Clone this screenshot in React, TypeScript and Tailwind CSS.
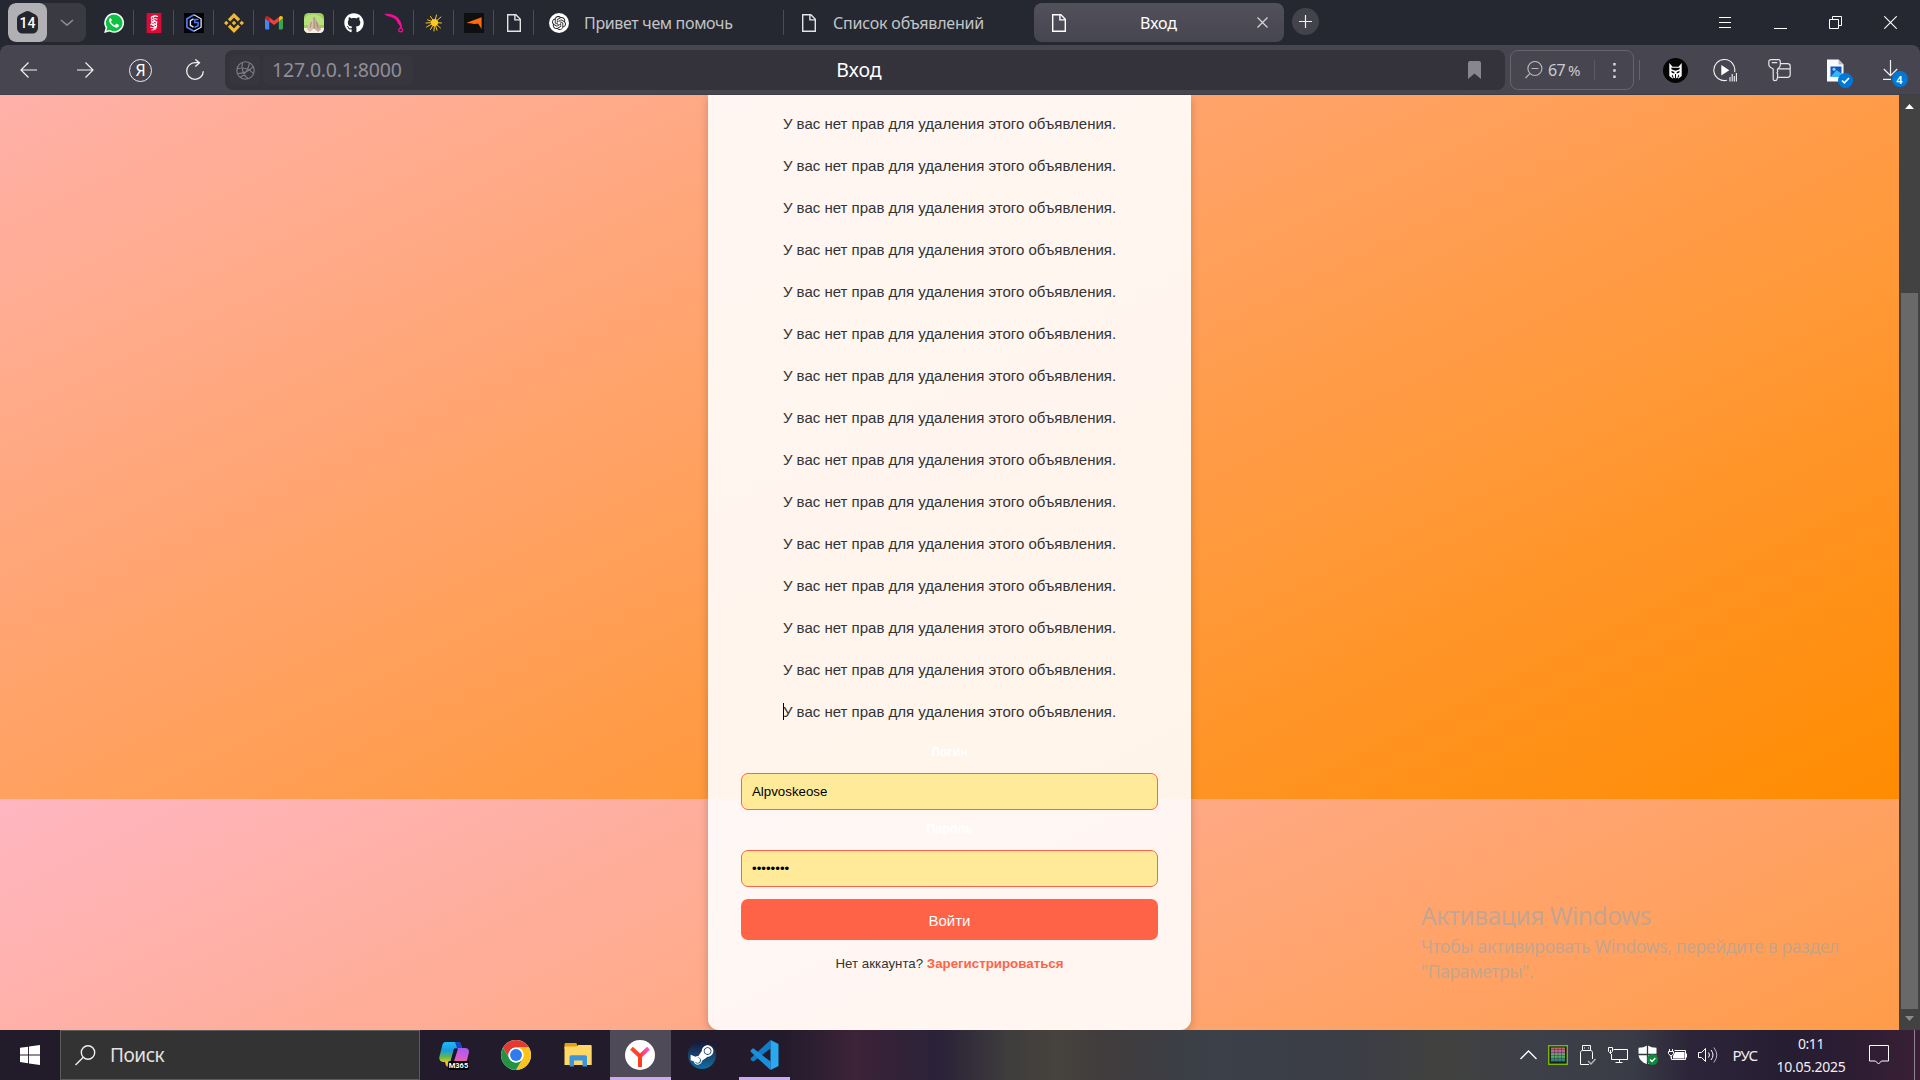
import React from 'react';
import { FaGithub, FaWhatsapp, FaSteamSymbol } from 'react-icons/fa';
import { SiBinance, SiOpenai } from 'react-icons/si';

const MESSAGE = 'У вас нет прав для удаления этого объявления.';
const MESSAGE_COUNT = 15;

type Box = { className?: string; children: React.ReactNode };

/* ---------- Favicons ---------- */

function DocIcon({ color = '#e4e4e6' }: { color?: string }) {
  return (
    <svg width="20" height="20" viewBox="0 0 20 20" fill="none" stroke={color} strokeWidth="1.4">
      <path d="M3.7 1.7h8.2l4.4 4.6v12H3.7z" />
      <path d="M10.9 1.7v5.2h5.2" />
    </svg>
  );
}

function WhatsAppIcon() {
  return (
    <svg width="20" height="20" viewBox="0 0 20 20">
      <path d="M10.100 0A9.900 9.900 0 0 0 1.600 14.900L.1 20l5.300-1.400A9.900 9.900 0 1 0 10.100 0z" fill="#fff" />
      <path d="M10.100 1.600a8.300 8.300 0 0 0-6.800 13l-1 3.200 3.400-.9A8.300 8.300 0 1 0 10.100 1.600z" fill="#0cc143" />
      <path d="M7 5.200c-.3-.1-.8 0-1.200.4-.6.700-.9 1.500-.6 2.600.8 2.700 3.300 5.400 6.300 6.400 1.500.4 3.200-.5 3.400-1.900.1-.5 0-.8-.3-.9l-2-1c-.4-.1-.6 0-.8.300l-.7.9c-.2.200-.5.200-.8.100-1.500-.7-2.500-1.700-3.300-3.100-.1-.3 0-.5.200-.7.500-.5.800-.9.600-1.400z" fill="#fff" />
    </svg>
  );
}

function RedScriptIcon() {
  return (
    <svg width="20" height="20" viewBox="0 0 20 20">
      <rect x="2.6" width="14.8" height="20" fill="#dc0a37" />
      <g fill="none" stroke="#fff" strokeWidth="1.1">
        <path d="M14 3.500C10 2 6.500 3.600 7.300 5.500c.8 1.700 5.700 2.200 5.500 4.500-.2 2-4 2.300-6.500 1.300" />
        <path d="M13.500 6.200C10.500 5 7 6.300 7.500 8.200c.6 1.900 5.700 2.300 5.300 4.600-.3 1.900-4 2.200-6.500 1.200" />
        <path d="M13.300 9c-2.800-1.200-6-.3-5.600 1.700.4 1.800 4.700 2.500 4.400 4.300-.3 1.500-2.600 2-4.600 2" />
        <path d="M11 2.500 8.700 5M12 13.500 9.500 16" />
      </g>
    </svg>
  );
}

function HexIcon() {
  return (
    <svg width="20" height="20" viewBox="0 0 20 20" fill="none">
      <rect width="20" height="20" fill="#020203" />
      <path d="M10 1.700 2.900 5.800v8.400L10 18.300" stroke="#5b7cf0" strokeWidth="1.700" />
      <path d="m10 1.700 7.100 4.100v8.400L10 18.300" stroke="#dfe6fb" strokeWidth="1.300" />
      <path d="M9.500 5.800 6.400 7.600v4.800l3.100 1.800" stroke="#dfe6fb" strokeWidth="1.400" />
      <path d="M14.500 6.500h-3.700v3h3.300v3.200l-3.600 1.800" stroke="#4d74f5" strokeWidth="1.500" />
    </svg>
  );
}

function GmailIcon() {
  return (
    <svg width="20" height="20" viewBox="0 0 20 20">
      <path d="M1 5.200v9.800c0 .9.600 1.500 1.400 1.500H5.200V8.300z" fill="#4285f4" />
      <path d="M14.800 8.300v8.200h2.800c.8 0 1.400-.6 1.400-1.500V5.200z" fill="#34a853" />
      <path d="M14.800 4.200v4.200L19 5.300V5c0-1.700-1.900-2.600-3.200-1.600z" fill="#fbbc04" />
      <path d="M5.200 8.400V4.200L10 7.700l4.800-3.500v4.200L10 12z" fill="#ea4335" />
      <path d="M1 5v.3l4.200 3.100V4.200l-1-.8C2.900 2.400 1 3.300 1 5z" fill="#c5221f" />
    </svg>
  );
}

function HandsIcon() {
  return (
    <svg width="20" height="20" viewBox="0 0 20 20">
      <defs>
        <clipPath id="handsClip">
          <rect width="20" height="20" rx="4.500" />
        </clipPath>
      </defs>
      <g clipPath="url(#handsClip)">
        <rect width="20" height="20" fill="#9dcc5a" />
        <path d="M0 6 4 2l6-1 6 2 4 4v5H0z" fill="#b5e07a" />
        <path d="M0 15h20v5H0z" fill="#f3efe9" />
        <path d="M9.800 4c-1.300 0-2.300 4-4.700 7.500-1 1.700-2.100 3.500-2 5L6 19l3.800-3.500z" fill="#d9bfae" />
        <path d="M10.200 4c1.300 0 2.300 4 4.700 7.500 1 1.700 2.100 3.500 2 5L14 19l-3.800-3.500z" fill="#c9ab99" />
        <path d="M10 4v12M7.500 9 6 15M12.500 9l1.500 6" stroke="#8d7768" strokeWidth=".7" />
      </g>
    </svg>
  );
}

function PinkTailIcon() {
  return (
    <svg width="20" height="20" viewBox="0 0 20 20" fill="none">
      <path d="M.5 1C8.500-.2 15 4 17 9.500c.8 2.300 1.300 4.500.8 6.500l-1.300-.5c.1-2-1-3.700-2.700-5C13.300 6.500 8 3.500 4 3.200 2.500 2.800 1 2 .5 1z" fill="#f70c93" />
      <circle cx="16.700" cy="17" r="1.900" stroke="#f70c93" strokeWidth="1.200" />
    </svg>
  );
}

function SunIcon() {
  return (
    <svg width="20" height="20" viewBox="0 0 20 20" stroke="#fbca1e" strokeLinecap="round">
      <circle cx="10.500" cy="9.500" r="3.600" fill="#fbca1e" stroke="none" />
      <path d="M10.500 9.500 12.500 2M10.500 9.500 17 4M10.500 9.500l7 .5M10.500 9.500l6 5.500M10.500 9.500l2.500 7.700M10.500 9.500 10 18M10.500 9.500l-4 7M10.500 9.500 2.500 14M10.500 9.500 2 10M10.500 9.500l-7-2.700M10.500 9.500l-4-6" strokeWidth="1" />
    </svg>
  );
}

function OrangeWingIcon() {
  return (
    <svg width="20" height="20" viewBox="0 0 20 20">
      <rect width="20" height="20" fill="#0e0f10" />
      <path d="M2.700 9.800 17.600 4.300v11.800l-3.400-5.300c-3.500.3-8 .3-11.500-1z" fill="#ff6a0d" />
    </svg>
  );
}

function ChatGptIcon() {
  return (
    <span className="flex h-5 w-5 shrink-0 items-center justify-center rounded-full bg-white">
      <SiOpenai className="h-[14px] w-[14px] text-[#202123]" />
    </span>
  );
}

const favicons = [
  <WhatsAppIcon />,
  <RedScriptIcon />,
  <HexIcon />,
  <SiBinance className="h-5 w-5 text-[#f3ba2f]" />,
  <GmailIcon />,
  <HandsIcon />,
  <FaGithub className="h-[20px] w-[20px] text-white" />,
  <PinkTailIcon />,
  <SunIcon />,
  <OrangeWingIcon />,
  <DocIcon />,
];

/* ---------- Browser chrome ---------- */

function TabStrip() {
  return (
    <div className="flex h-[45px] bg-[#252830] text-[#c3c4c7]">
      <div className="mt-[3px] ml-2 flex h-[39px] w-[78px] overflow-hidden rounded-[8px] bg-[#3a3a42]">
        <div className="flex w-[39px] items-center justify-center rounded-[8px] bg-[#b0b0b5]">
          <span className="relative flex h-[23px] w-[21px] items-center justify-center">
            <svg className="absolute inset-0" width="21" height="23" viewBox="0 0 21 23">
              <path d="M8.500.6a4 4 0 0 1 4 0l5.800 3A4.600 4.600 0 0 1 21 7.700V17a5.500 5.500 0 0 1-5.500 5.500h-10A5.500 5.500 0 0 1 0 17V7.700a4.600 4.600 0 0 1 2.700-4.100z" fill="#24262e" />
            </svg>
            <span className="relative font-['Roboto',sans-serif] text-[14px] leading-none font-medium text-white">14</span>
          </span>
        </div>
        <div className="flex flex-1 items-center justify-center">
          <svg width="14" height="8" viewBox="0 0 14 8" fill="none" stroke="#8a8a92" strokeWidth="1.600">
            <path d="m1 1 6 5.200L13 1" />
          </svg>
        </div>
      </div>
      <div className="ml-[8px] flex h-[45px]">
        {favicons.map((icon, i) => (
          <div key={i} className="flex h-[45px] w-10 items-center">
            <div className="flex h-5 w-full items-center justify-center">{icon}</div>
            <div className="-ml-px h-[25px] w-px shrink-0 bg-[#4b4d55]" />
          </div>
        ))}
      </div>
      <div className="flex w-[249.500px] items-center">
        <div className="ml-[15px] flex items-center">
          <ChatGptIcon />
          <span className="ml-[15px] text-[16px] tracking-[-0.340px]">Привет чем помочь</span>
        </div>
        <div className="ml-auto h-[25px] w-px bg-[#4b4d55]" />
      </div>
      <div className="flex w-[250.500px] items-center">
        <div className="ml-[15.500px] flex items-center">
          <DocIcon />
          <span className="ml-[14px] text-[16px] tracking-[-0.200px]">Список объявлений</span>
        </div>
      </div>
      <div className="mt-[3px] flex h-[39px] w-[250px] items-center rounded-[8px] bg-linear-to-b from-[#52515b] to-[#474650] text-white">
        <div className="ml-[15px] w-5">
          <DocIcon color="#ffffff" />
        </div>
        <span className="flex-1 pr-[6px] text-center text-[16px]">Вход</span>
        <svg className="mr-[16px] ml-[3px]" width="11" height="11" viewBox="0 0 11 11" stroke="#d6d6da" strokeWidth="1.200">
          <path d="m.5.5 10 10M10.500.5l-10 10" />
        </svg>
      </div>
      <div className="mt-2 ml-2 flex h-[27px] w-[27px] items-center justify-center rounded-full bg-[#42434b]">
        <svg width="13" height="13" viewBox="0 0 13 13" stroke="#f0f0f2" strokeWidth="1.200">
          <path d="M6.500 0v13M0 6.500h13" />
        </svg>
      </div>
      <div className="mr-[2px] ml-auto flex">
        <div className="flex w-[55px] items-center justify-center pr-px">
          <svg width="12" height="11" viewBox="0 0 12 11" fill="#fff">
            <path d="M0 0h12v1H0zM0 5h12v1H0zM0 10h12v1H0z" />
          </svg>
        </div>
        <div className="flex w-[55px] items-center justify-center">
          <div className="mt-[12px] h-px w-[13px] bg-white" />
        </div>
        <div className="flex w-[55px] items-center justify-center">
          <svg width="13" height="13" viewBox="0 0 13 13" fill="none" stroke="#fff">
            <path d="M.5 3.500h9v9h-9zM3.500 3.500v-3h9v9h-3" />
          </svg>
        </div>
        <div className="flex w-[55px] items-center justify-center">
          <svg width="13" height="13" viewBox="0 0 13 13" stroke="#fff" strokeWidth="1.100">
            <path d="m.3.3 12.400 12.400M12.700.3.300 12.700" />
          </svg>
        </div>
      </div>
    </div>
  );
}

function Cell({ className = '', children }: Box) {
  return <div className={`flex h-full shrink-0 items-center justify-center ${className}`}>{children}</div>;
}

function Toolbar() {
  return (
    <div className="h-[50px] bg-[#252830]">
      <div className="flex h-[50px] items-center rounded-t-[8px] bg-[#474650] shadow-[inset_0_-1px_0_#3f3e47]">
        <Cell className="w-[57px]">
          <svg width="17" height="16" viewBox="0 0 17 16" fill="none" stroke="#f1f1f3" strokeWidth="1.200">
            <path d="M17 8H1M8.500.5 1 8l7.500 7.500" />
          </svg>
        </Cell>
        <Cell className="w-[57px]">
          <svg width="17" height="16" viewBox="0 0 17 16" fill="none" stroke="#f1f1f3" strokeWidth="1.200">
            <path d="M0 8h16M8.500.5 16 8l-7.500 7.500" />
          </svg>
        </Cell>
        <Cell className="w-[53px]">
          <div className="flex h-[23px] w-[23px] items-center justify-center rounded-full border border-[#ededf0] text-[16px] leading-none text-white">
            Я
          </div>
        </Cell>
        <Cell className="w-[55px]">
          <svg width="20" height="22" viewBox="0 0 20 22" fill="none" stroke="#f1f1f3" strokeWidth="1.300">
            <path d="M18.300 12.200a8.300 8.300 0 1 1-8.300-8.500h4" />
            <path d="m10.300.4 4.200 3.400-4.200 3.700" />
          </svg>
        </Cell>
        <div className="ml-[3px] flex h-10 w-[1280px] items-center rounded-[8px] bg-[#34333c]">
          <div className="ml-[5px] flex h-[30px] w-[30px] items-center justify-center rounded-[6px] bg-[#37363f]">
            <svg width="19" height="19" viewBox="0 0 19 19" fill="none" stroke="#7f7f89" strokeWidth="1.100">
              <circle cx="9.500" cy="9.500" r="8.700" />
              <path d="M6.500 1.500C5 7 7 14 12 17.800M13.500 1.800C12.500 8 8.500 14.500 4 16.200M1 8c5-2.200 12-.5 16.500 4.500M1.500 12.500C7 12.500 14 10 17 5.500" />
            </svg>
          </div>
          <div className="ml-[3px] flex h-[30px] w-[150px] items-center rounded-[6px] bg-[#37363f] pl-[9px] text-[19.500px] tracking-[-0.200px] text-[#8f8f97]">
            127.0.0.1:8000
          </div>
          <div className="w-[892px] text-center text-[19.500px] text-white">Вход</div>
          <svg className="mr-[24px] ml-auto" width="13" height="18" viewBox="0 0 13 18" fill="#87868e">
            <path d="M2 0h9a2 2 0 0 1 2 2v16l-6.500-5.500L0 18V2a2 2 0 0 1 2-2z" />
          </svg>
        </div>
        <div className="ml-[5px] flex h-10 w-[124px] items-center rounded-[8px] border border-[#66656e]">
          <svg className="ml-[14px]" width="18" height="18" viewBox="0 0 18 18" fill="none" stroke="#b5b5ba" strokeWidth="1.200">
            <circle cx="9.900" cy="7.500" r="7" />
            <path d="M4.800 12.600.5 17M6.500 7.500h7" />
          </svg>
          <span className="ml-[5px] flex w-[32px] items-baseline justify-between text-[16px] tracking-[-0.550px] whitespace-pre text-[#cbcbcf]">
            67 <span className="-ml-[2px] text-[15px]">%</span>
          </span>
          <div className="ml-[14px] h-[20px] w-px bg-[#5b5a63]" />
          <svg className="ml-[18px]" width="3" height="15" viewBox="0 0 3 15" fill="#d8d8dc">
            <path d="M.2 0h2.500v2.500H.2zM.2 6.200h2.500v2.500H.2zM.2 12.500h2.500V15H.2z" />
          </svg>
        </div>
        <div className="ml-[5px] h-[20px] w-px bg-[#65646d]" />
        <Cell className="ml-[13px] w-[45px]">
          <svg width="25" height="25" viewBox="0 0 25 25">
            <circle cx="12.500" cy="12.500" r="12.500" fill="#050505" />
            <path d="M6.300 5v13l3.200 2.500 1.400-.8 1.600.8 1.600-.8 1.400.8 3.200-2.500V5l-3.200 3.700H9.500z" fill="#fff" />
            <path d="M8 9.800h9l-.8 1.700-3.700 1.200-3.700-1.200zM8.300 12.800l3 1.200v1.500l-2.500-.7zM16.700 12.800l-3 1.200v1.500l2.500-.7zM12 16h1v4.500h-1zM9.300 16.500l1.300 2.800-.5.700-1.400-2zM15.700 16.500l-1.300 2.800.5.700 1.400-2z" fill="#050505" />
          </svg>
        </Cell>
        <Cell className="w-[54px]">
          <svg width="24" height="23" viewBox="0 0 24 23" fill="none" stroke="#f1f1f3" strokeWidth="1.100">
            <path d="M14 21.200a10.500 10.500 0 1 1 7.600-8" />
            <path d="M8.300 6v10.500l8-5.200z" fill="#fff" stroke="none" />
            <path d="M17 18v4.500M19.200 15v7.500M21.300 17v5.500M23.400 14v8.500" />
          </svg>
        </Cell>
        <Cell className="w-[54px]">
          <svg width="23" height="23" viewBox="0 0 23 23" fill="none" stroke="#e6e6e9" strokeWidth="1.200">
            <path d="M3 .7h7.500c1.200 0 1.800 1 1.800 2v3.300c0 1.600-.8 2.800-2.600 4l-.4 1 .5 1.400-.8 1.300.8 1.500-.5 4.500c-.2 1.200-1.200 2-2.400 2-1 0-1.700-.7-1.700-1.700V10C2.500 8.700.8 7.300.8 5.500V2.700C.8 1.500 1.800.7 3 .7zM3.800 3.600h5.400" />
            <path d="M12.400 4.700h7.200c1.500 0 2.600 1 2.600 2.500v8.600c0 1.500-1 2.500-2.600 2.500h-9.400M10.500 9.800h11.600" />
          </svg>
        </Cell>
        <Cell className="ml-[2px] w-[54px]">
          <span className="relative h-[23px] w-[18px]">
            <svg width="20" height="23" viewBox="0 0 20 23">
              <path d="M1 .5h11.500l5 5V22.500H1z" fill="#fafafa" />
              <path d="M12.500.5v5h5z" fill="#b9bbc0" />
              <rect x="4.500" y="7.500" width="11" height="10.500" fill="#1554b8" />
              <path d="m4.500 18 6-7 5 3.500V18z" fill="#35b6f2" />
              <circle cx="8" cy="10.200" r="1.500" fill="#7fd3ff" />
            </svg>
            <span className="absolute top-[14px] left-[12px] flex h-[15px] w-[15px] items-center justify-center rounded-full bg-[#0078d7]">
              <svg width="9" height="7" viewBox="0 0 9 7" fill="none" stroke="#fff" strokeWidth="1.700">
                <path d="m1 3.500 2.400 2.300L8 1" />
              </svg>
            </span>
          </span>
        </Cell>
        <Cell className="w-[56px]">
          <span className="relative h-[20px] w-[15px]">
            <svg width="15" height="20" viewBox="0 0 15 20" fill="none" stroke="#f1f1f3" strokeWidth="1.200">
              <path d="M7.500 0v15.500M.8 9l6.700 6.700L14.200 9M0 19.300h8" />
            </svg>
            <span className="absolute top-[11px] left-[9px] flex h-[16px] w-[16px] items-center justify-center rounded-full bg-[#0078d7] text-[11px] leading-none font-semibold text-white">
              4
            </span>
          </span>
        </Cell>
      </div>
    </div>
  );
}

/* ---------- Page ---------- */

function Field({ label, value }: { label: string; value: string }) {
  return (
    <>
      <label className="flex h-10 items-center justify-center pb-px text-[12.500px] leading-none font-bold text-white">{label}</label>
      <div className="flex h-[37px] items-center rounded-[7px] border border-[#ff6347] bg-[#ffea99] pl-[10px] text-[13.300px] leading-none text-black">
        {value}
      </div>
    </>
  );
}

function LoginPage() {
  return (
    <main className="flex h-full w-[1899px] justify-center overflow-hidden bg-[linear-gradient(to_bottom_right,#ffb6c1,#ff8c00)] bg-[length:100%_935px] bg-[position:0_704px] bg-repeat-y font-['Liberation_Sans',Arial,sans-serif]">
      <div className="flex h-[935px] w-[483px] flex-col rounded-b-[11px] bg-white/90 px-[33px] pt-[7px] text-[#333] shadow-[0_3px_10px_rgba(0,0,0,0.2)]">
        {Array.from({ length: MESSAGE_COUNT }, (_, i) => (
          <p key={i} className="flex h-[42px] shrink-0 items-center justify-center text-[15px] leading-none whitespace-nowrap">
            <span className="relative">
              {i === MESSAGE_COUNT - 1 && <span className="absolute top-[-1px] left-0 h-[17px] w-px bg-black" />}
              {MESSAGE}
            </span>
          </p>
        ))}
        <div className="h-px shrink-0" />
        <Field label="Логин" value="Alpvoskeose" />
        <Field label="Пароль" value="••••••••" />
        <button className="mt-3 h-[41px] shrink-0 rounded-[7px] bg-[#ff6347] pt-px text-[15px] leading-none text-white">Войти</button>
        <p className="mt-[14px] text-center text-[13.300px] leading-5">
          Нет аккаунта? <a className="font-bold text-[#ff6347]">Зарегистрироваться</a>
        </p>
      </div>
    </main>
  );
}

function ScrollBar() {
  return (
    <div className="flex h-full w-[21px] flex-col items-center bg-[#424242]">
      <svg className="mt-[9px]" width="9" height="5" viewBox="0 0 9 5" fill="#fff">
        <path d="M4.500 0 9 5H0z" />
      </svg>
      <div className="mt-[184px] h-[716px] w-[17px] bg-[#696969]" />
      <svg className="mt-[7px]" width="9" height="5" viewBox="0 0 9 5" fill="#8b8b8b">
        <path d="M4.500 5 9 0H0z" />
      </svg>
    </div>
  );
}

/* ---------- Taskbar ---------- */

function CopilotIcon() {
  return (
    <span className="relative h-[30px] w-[30px]">
      <svg width="30" height="30" viewBox="0 0 30 30">
        <defs>
          <linearGradient id="copLeft" x1="0" y1="0" x2="0" y2="1">
            <stop offset="0" stopColor="#23b7f5" />
            <stop offset=".35" stopColor="#159ce0" />
            <stop offset=".62" stopColor="#64b94a" />
            <stop offset=".85" stopColor="#f3c814" />
            <stop offset="1" stopColor="#f77a35" />
          </linearGradient>
          <linearGradient id="copRight" x1=".4" y1="0" x2=".3" y2="1">
            <stop offset="0" stopColor="#a55cf0" />
            <stop offset=".5" stopColor="#d55bd0" />
            <stop offset="1" stopColor="#ff6a75" />
          </linearGradient>
        </defs>
        <path d="M6.500 2h12.300c1.800 0 2.600 1 3.100 2.600L23 8h-4.500c-2 0-3 1-3.600 3l-3 10.500c-.6 2.500-1.400 5-3.900 5C6 26.500 7 22 5.500 22H4c-3 0-4.200-2.500-3.500-5.500L3.200 5.500C3.800 3.200 4.800 2 6.500 2z" fill="url(#copLeft)" />
        <path d="M16 2h2.800c1.800 0 2.600 1 3.100 2.600L23 8h-5z" fill="#1446c8" />
        <path d="M18.500 8H26c3.200 0 4.500 2 3.800 5l-2.300 9c-.6 2.500-1.700 3.500-4 3.500H10.500c2 0 2.800-1.300 3.400-3.500l3-11c.4-1.700.6-3 1.600-3z" fill="url(#copRight)" />
        <path d="M15 8.500h4L14.500 23H11z" fill="#1d1530" />
      </svg>
      <span className="absolute top-[21px] left-[9px] flex h-[9px] w-[21px] items-center justify-center rounded-[2px] bg-black font-['Roboto',sans-serif] text-[7.500px] leading-none font-bold text-white">
        M365
      </span>
    </span>
  );
}

function ChromeIcon() {
  return (
    <svg width="30" height="30" viewBox="0 0 48 48">
      <circle cx="24" cy="24" r="24" fill="#fff" />
      <path d="M24 12h20.780A24 24 0 0 0 3.220 12L13.600 30A12 12 0 0 1 24 12z" fill="#e33b2e" />
      <path d="M34.400 30 24 48A24 24 0 0 0 44.780 12H24a12 12 0 0 1 10.400 18z" fill="#fcc31e" />
      <path d="M13.600 30 3.220 12A24 24 0 0 0 24 48l10.400-18a12 12 0 0 1-20.800 0z" fill="#229342" />
      <circle cx="24" cy="24" r="12" fill="#fff" />
      <circle cx="24" cy="24" r="9.500" fill="#2f7bf0" />
    </svg>
  );
}

function FolderIcon() {
  return (
    <svg width="28" height="24" viewBox="0 0 28 24">
      <path d="M.5 1.500c0-.8.500-1.500 1.300-1.500h9.700c.8 0 1.500.7 1.500 1.500V6H.5z" fill="#e5a00d" />
      <path d="M.5 3.500h12L14 2h12.500c.8 0 1.200.5 1.200 1.200V22H.5z" fill="#ffd766" />
      <path d="M5.500 23.500V14c0-1 .8-1.700 1.700-1.700h14c1 0 1.800.7 1.800 1.700v9.500h-4.500v-6h-8.500v6z" fill="#3b95dc" />
    </svg>
  );
}

function YandexIcon() {
  return (
    <svg width="30" height="30" viewBox="0 0 30 30" fill="none">
      <defs>
        <linearGradient id="yaArm" x1="0" x2="1">
          <stop offset="0" stopColor="#ff4a20" />
          <stop offset=".55" stopColor="#ff3a3a" />
          <stop offset="1" stopColor="#ff4fd0" />
        </linearGradient>
      </defs>
      <circle cx="15" cy="15" r="15" fill="#fff" />
      <path d="m6.500 8.300 8.500 8 8.500-8" stroke="url(#yaArm)" strokeWidth="4" />
      <path d="M15 15v12" stroke="#fb3f1f" strokeWidth="4" />
    </svg>
  );
}

function SteamIcon() {
  return (
    <span className="flex h-7 w-7 items-center justify-center overflow-hidden rounded-full bg-linear-to-b from-[#12183a] to-[#0d6fa3]">
      <FaSteamSymbol className="h-[26px] w-[26px] shrink-0 text-white" />
    </span>
  );
}

function VsCodeIcon() {
  return (
    <svg width="31" height="30" viewBox="0 0 31 30">
      <path d="M22.500 0 3.200 17.800c-.8.700-.8 1.700 0 2.400l.9.800c.6.600 1.500.6 2.200.1L22.500 8.500z" fill="#0f7dc8" />
      <path d="M22.500 30 3.200 12.200c-.8-.7-.8-1.700 0-2.400l.9-.8c.6-.6 1.500-.6 2.200-.1L22.500 21.500z" fill="#1a8fdc" />
      <path d="M22.500 0 30.500 4v22l-8 4z" fill="#2aa9f2" />
    </svg>
  );
}

function Taskbar() {
  return (
    <div className="flex h-[50px] bg-[linear-gradient(90deg,#221b2a_0%,#231b2c_41%,#3c2338_44.500%,#2a2238_49%,#3f3d3d_52.500%,#46423d_55%,#403c3d_58%,#3b4049_63%,#3c3e47_70%,#41413f_75%,#3d4048_80%,#393c46_85%,#2c2539_88%,#261d33_93%,#2e1d33_97%,#3a2036_100%)] text-[#f1eff3]">
      <Cell className="w-[60px]">
        <svg width="20" height="20" viewBox="0 0 20 20" fill="#fff">
          <path d="M0 2.800 8.100 1.700v7.700H0zM9 1.500 20 0v9.400H9zM0 10.400h8.100v7.800L0 17.100zM9 10.400h11V20L9 18.400z" />
        </svg>
      </Cell>
      <div className="flex w-[360px] items-center border border-[#5b5b5b] bg-[#333333]">
        <svg className="ml-[14px]" width="21" height="21" viewBox="0 0 21 21" fill="none" stroke="#f0f0f0" strokeWidth="1.400">
          <circle cx="13" cy="7.500" r="6.700" />
          <path d="M8.300 12.300.5 20" />
        </svg>
        <span className="ml-[14px] text-[19px] tracking-[-0.450px] text-[#e2e2e2]">Поиск</span>
      </div>
      <Cell className="ml-[3px] w-[62px]">
        <CopilotIcon />
      </Cell>
      <Cell className="w-[62px]">
        <ChromeIcon />
      </Cell>
      <Cell className="w-[62px]">
        <FolderIcon />
      </Cell>
      <div className="ml-[1px] flex w-[61px] flex-col bg-[#4e4a57]">
        <div className="flex flex-1 items-center justify-center pt-[3px] pr-[1px]">
          <YandexIcon />
        </div>
        <div className="h-[3px] bg-[#caaaf5]" />
      </div>
      <Cell className="w-[61px]">
        <SteamIcon />
      </Cell>
      <div className="ml-[7px] flex w-[51px] flex-col">
        <div className="flex flex-1 items-center justify-center pt-[3px] pr-[3px]">
          <VsCodeIcon />
        </div>
        <div className="h-[3px] bg-[#caaaf5]" />
      </div>

      <div className="ml-auto flex">
        <Cell className="w-[30px]">
          <svg width="17" height="10" viewBox="0 0 17 10" fill="none" stroke="#fff" strokeWidth="1.300">
            <path d="m.5 9 8-8 8 8" />
          </svg>
        </Cell>
        <Cell className="w-[30px]">
          <svg width="20" height="20" viewBox="0 0 20 20">
            <defs>
              <linearGradient id="gpu" x1="0" y1="0" x2="0" y2="1">
                <stop offset="0" stopColor="#b8705a" />
                <stop offset=".3" stopColor="#c060a8" />
                <stop offset=".6" stopColor="#4fb85e" />
                <stop offset="1" stopColor="#2f6f8a" />
              </linearGradient>
            </defs>
            <rect x=".7" y=".7" width="18.600" height="18.600" fill="#1c1c20" stroke="#76b900" strokeWidth="1.400" />
            <rect x="3" y="2.500" width="14" height="14" fill="url(#gpu)" />
            <path d="M3 4.500h14M3 7.500h14M3 10.500h14M3 13.500h14M6.500 2.500v14M10 2.500v14M13.500 2.500v14" stroke="#222" strokeOpacity=".6" strokeWidth=".6" />
          </svg>
        </Cell>
        <Cell className="w-[30px]">
          <svg width="16" height="20" viewBox="0 0 16 20" fill="none" stroke="#fff">
            <path d="M2.500 5.500v-5h8v5M9 19.500H.5v-12c0-1.200.8-2 2-2h8c1.200 0 2 .8 2 2V14M4.500 2.500v1M8.500 2.500v1" />
            <path d="m8 16 3 3 4.500-5" stroke="#b8bac0" strokeWidth="1.300" />
          </svg>
        </Cell>
        <Cell className="w-[30px]">
          <svg width="20" height="17" viewBox="0 0 20 17" fill="none" stroke="#fff">
            <path d="M5.500 2.500h14v10H3.500V7M11.500 12.500v3M7.500 15.500h7M.5.500h4v4l-1 1h-2l-1-1zM2.500 3v4" />
          </svg>
        </Cell>
        <Cell className="w-[30px]">
          <svg width="20" height="20" viewBox="0 0 20 20">
            <path d="M9.500.3c2.500 1.700 5.500 2.500 9 2.500V9c0 5-3.500 8.300-9 10.500C4 17.300.5 14 .5 9V2.800c3.500 0 6.500-.8 9-2.500z" fill="#fff" />
            <path d="M9.500 0v20M0 9.500h19" stroke="#33363f" strokeWidth="1.300" />
            <circle cx="14.500" cy="14.500" r="5.500" fill="#10893e" />
            <path d="m12 14.500 2 2 3.300-3.500" stroke="#fff" strokeWidth="1.300" fill="none" />
          </svg>
        </Cell>
        <Cell className="w-[30px]">
          <svg width="20" height="14" viewBox="0 0 20 14" fill="none" stroke="#fff">
            <path d="M6.500 2.500h11v9h-14v-3" />
            <path d="M7 4h9.500v6.500H5V8z" fill="#fff" stroke="none" />
            <path d="M18.500 5.500v4M.5 3.500h5v2l-1.500 2H2l-1.500-2zM1.500 3V1M4.500 3V1M3 7.500v3" />
          </svg>
        </Cell>
        <Cell className="w-[30px]">
          <svg width="20" height="18" viewBox="0 0 20 18" fill="none" stroke="#fff">
            <path d="M.5 6.500h3l4-4v13l-4-4h-3z" />
            <path d="M10.500 6.500q2 2.500 0 5M13 4q4 5 0 10" />
            <path d="M15.800 1.500q6 7.500 0 15" stroke="#b9b5c2" />
          </svg>
        </Cell>
        <Cell className="ml-[4px] w-[36px]">
          <span className="text-[15px] tracking-[-0.600px]">РУС</span>
        </Cell>
        <div className="ml-[3px] flex w-[90px] flex-col items-center pt-[2px] text-[14px] leading-[23px]">
          <span className="tracking-[-0.400px]">0:11</span>
          <span className="tracking-[-0.260px]">10.05.2025</span>
        </div>
        <Cell className="ml-[4px] w-[38px]">
          <svg width="20" height="20" viewBox="0 0 20 20" fill="none" stroke="#fff">
            <path d="M.5.500h19v15.500h-7l-3 3-3-3h-6z" />
          </svg>
        </Cell>
        <div className="mr-[5px] ml-[16px] h-full w-px bg-[#8b8590]" />
      </div>
    </div>
  );
}

export default function App() {
  return (
    <div className="relative flex h-[1080px] w-[1920px] flex-col overflow-hidden font-['Noto_Sans','Open_Sans',sans-serif]">
      <TabStrip />
      <Toolbar />
      <div className="flex h-[935px]">
        <LoginPage />
        <ScrollBar />
      </div>
      <Taskbar />
      <div className="pointer-events-none absolute top-[898px] left-[1421px] whitespace-nowrap text-[#a3a6a8]/65">
        <div className="text-[24.500px] leading-[36px] tracking-[-0.470px]">Активация Windows</div>
        <div className="text-[17.500px] leading-[25px] tracking-[-0.320px]">Чтобы активировать Windows, перейдите в раздел</div>
        <div className="text-[17.500px] leading-[25px] tracking-[-0.380px]">"Параметры".</div>
      </div>
    </div>
  );
}
